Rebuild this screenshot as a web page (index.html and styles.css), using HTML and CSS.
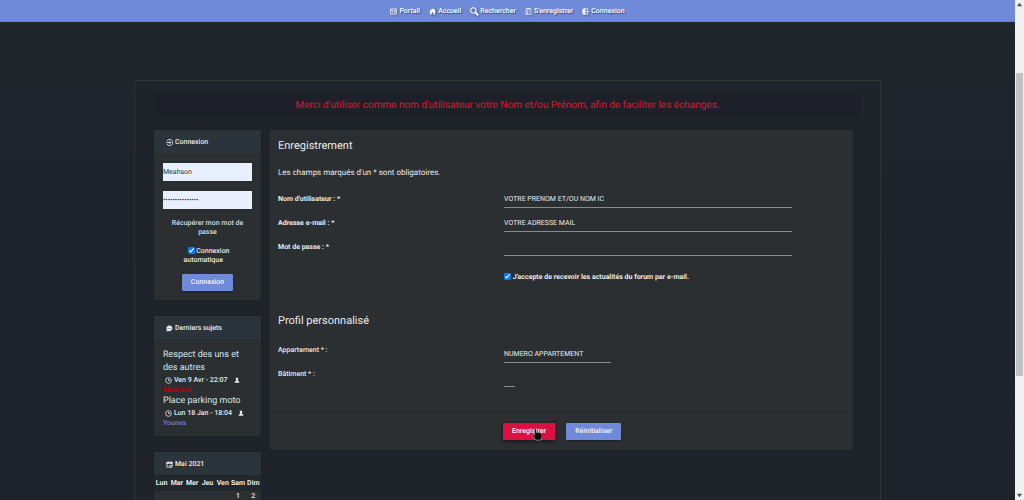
FILE: index.html
```html
<!DOCTYPE html>
<html lang="fr">
<head>
<meta charset="utf-8">
<title>Enregistrement</title>
<link rel="stylesheet" href="styles.css">
</head>
<body>
<div class="page">
  <nav class="topbar">
    <a href="#"><svg viewBox="0 0 16 16"><path d="M1 2h14v12H1zM1 5h14M4 8h3M9 8h4M4 11h3M9 11h4" fill="none" stroke="currentColor" stroke-width="1.6"/></svg>Portail</a>
    <a href="#"><svg viewBox="0 0 16 16"><path d="M8 1 0 8h2v7h4v-5h4v5h4V8h2l-3-3V2h-2v1z" fill="currentColor"/></svg>Accueil</a>
    <a href="#" class="search"><svg viewBox="0 0 16 16"><circle cx="6" cy="6" r="4.8" fill="none" stroke="currentColor" stroke-width="1.8"/><path d="m9.5 9.5 5.3 5.3" stroke="currentColor" stroke-width="2.8"/></svg>Rechercher</a>
    <a href="#"><svg viewBox="0 0 16 16"><path d="M2 2h12v13H2zM5 1h6v3H5zM4 7h3v2H4zM4 11h3v2H4zM9 8h3M9 12h3" fill="none" stroke="currentColor" stroke-width="1.4"/></svg>S'enregistrer</a>
    <a href="#"><svg viewBox="0 0 16 16"><path d="M1 2 8 0v16l-7-2z" fill="currentColor"/><path d="M8 2h5v3M8 14h5v-3M9 8h6M12 5l3 3-3 3" fill="none" stroke="currentColor" stroke-width="1.8"/></svg>Connexion</a>
  </nav>
  <div class="wrapper">
    <p class="announce">Merci d'utiliser comme nom d'utilisateur votre Nom et/ou Prénom, afin de faciliter les échanges.</p>
    <div class="columns">
      <aside class="side">
        <section class="card">
          <h3><svg viewBox="0 0 16 16"><path d="M2 5a7 7 0 1 1 0 6M1 8h10M8 5l3 3-3 3" fill="none" stroke="currentColor" stroke-width="2"/></svg>Connexion</h3>
          <form class="login">
            <input class="field" type="text" value="Meahson" aria-label="Nom d'utilisateur">
            <input class="field" type="password" value="motdepasse12345" aria-label="Mot de passe">
            <a class="recover" href="#">Récupérer mon mot de passe</a>
            <label class="auto"><input type="checkbox" class="tick" checked> Connexion automatique</label>
            <button class="btn" type="button">Connexion</button>
          </form>
        </section>
        <section class="card">
          <h3><svg viewBox="0 0 16 16"><path d="M8 1a7 6.500 0 0 0-6 10l-1 4 4-1.500A7 6.500 0 1 0 8 1z" fill="currentColor"/><path d="M4 8h1.500M7.300 8h1.500M10.600 8h1.500" stroke="#2c343b" stroke-width="1.600"/></svg>Derniers sujets</h3>
          <div class="topics">
            <a href="#" class="topic">Respect des uns et des autres</a>
            <div class="meta"><svg viewBox="0 0 16 16"><circle cx="8" cy="8" r="6.500" fill="none" stroke="currentColor" stroke-width="1.800"/><path d="M8 4v4h4" fill="none" stroke="currentColor" stroke-width="1.800"/></svg>Ven 9 Avr - 22:07<svg class="user" viewBox="0 0 16 16"><path d="M5 2h6v6l-1 2 4 2v3H2v-3l4-2-1-2z" fill="currentColor"/></svg></div>
            <a href="#" class="author red">Meahson</a>
            <a href="#" class="topic">Place parking moto</a>
            <div class="meta"><svg viewBox="0 0 16 16"><circle cx="8" cy="8" r="6.500" fill="none" stroke="currentColor" stroke-width="1.800"/><path d="M8 4v4h4" fill="none" stroke="currentColor" stroke-width="1.800"/></svg>Lun 18 Jan - 18:04<svg class="user" viewBox="0 0 16 16"><path d="M5 2h6v6l-1 2 4 2v3H2v-3l4-2-1-2z" fill="currentColor"/></svg></div>
            <a href="#" class="author blue">Younes</a>
          </div>
        </section>
        <section class="card">
          <h3><svg viewBox="0 0 16 16"><path d="M2 3h12v11H2z" fill="none" stroke="currentColor" stroke-width="2"/><path d="M1 3h14v3H1zM4 1h2v3H4zM10 1h2v3h-2zM8 9h4v3H8z" fill="currentColor"/></svg>Mai 2021</h3>
          <table class="calendar">
            <thead><tr><th>Lun</th><th>Mar</th><th>Mer</th><th>Jeu</th><th>Ven</th><th>Sam</th><th>Dim</th></tr></thead>
            <tbody><tr><td></td><td></td><td></td><td></td><td></td><td>1</td><td>2</td></tr></tbody>
          </table>
        </section>
      </aside>
      <form class="card register">
        <h2>Enregistrement</h2>
        <div class="group">
          <p class="hint">Les champs marqués d'un * sont obligatoires.</p>
          <div class="row"><label for="name">Nom d'utilisateur : *</label><input id="name" class="line" type="text" value="VOTRE PRENOM ET/OU NOM IC"></div>
          <div class="row"><label for="mail">Adresse e-mail : *</label><input id="mail" class="line" type="text" value="VOTRE ADRESSE MAIL"></div>
          <div class="row"><label for="pass">Mot de passe : *</label><input id="pass" class="line" type="password"></div>
          <div class="row news"><label class="accept"><input type="checkbox" class="tick" checked> J'accepte de recevoir les actualités du forum par e-mail.</label></div>
        </div>
        <h2 class="second">Profil personnalisé</h2>
        <div class="group profile">
          <div class="row"><label for="flat">Appartement * :</label><input id="flat" class="line medium" type="text" value="NUMERO APPARTEMENT"></div>
          <div class="row"><label for="block">Bâtiment * :</label><input id="block" class="line tiny" type="text"></div>
        </div>
        <div class="actions">
          <button class="btn primary" type="button">Enregistrer<svg class="cursor" viewBox="0 0 16 20"><path d="M4 2c0-2 3-2 3 0v5c1-1 2-1 3 0 1-1 2 0 3 1 2-1 3 0 3 2v4l-2 5H6l-5-7c-1-2 1-3 3-1z" fill="#080808" stroke="#ddd" stroke-width=".8"/></svg></button>
          <button class="btn" type="button">Réinitialiser</button>
        </div>
      </form>
    </div>
  </div>
</div>
<div class="scroll" aria-hidden="true">
  <svg viewBox="0 0 8 8"><path d="m1 6 3-4 3 4z" fill="#505050"/></svg>
  <div class="track"><div class="thumb"></div></div>
  <svg viewBox="0 0 8 8"><path d="m1 2 3 4 3-4z" fill="#505050"/></svg>
</div>
</body>
</html>
```
FILE: styles.css
```css
* { box-sizing: border-box; }
body {
  margin: 0;
  height: 100vh;
  display: flex;
  overflow: hidden;
  background: #1f252c;
  color: #e8eaeb;
  font: 500 7px/9px Roboto, sans-serif;
  text-rendering: geometricPrecision;
}
h2, h3, p { margin: 0; }
a { color: inherit; text-decoration: none; }
input, button { font: inherit; color: inherit; text-rendering: inherit; }
.page {
  flex: 1;
  min-width: 0;
  overflow: hidden;
  background: linear-gradient(#1f272b, #1f252c 100px, #1e232b);
}
.topbar {
  height: 22px;
  display: flex;
  align-items: center;
  justify-content: center;
  gap: 9px;
  padding-top: 1px;
  background: #6f8ad8;
  border-bottom: 1px solid #6680cb;
  color: #fff;
  text-shadow: 1px 1px 1px #0008;
}
.topbar a { display: flex; align-items: center; gap: 2px; }
.topbar svg { width: 7px; height: 7px; filter: drop-shadow(1px 1px 1px #0006); }
.topbar .search { gap: 1px; }
.topbar .search svg { width: 9px; height: 9px; }
.wrapper {
  max-width: 747px;
  min-height: 100%;
  margin: 58px auto 0;
  padding: 12px 19px;
  border: 1px solid #2e3333;
  background: #1f232a;
}
.announce {
  padding: 6px;
  background: #1d2028;
  color: #e0102f;
  font-size: 10px;
  font-weight: 400;
  line-height: 13px;
  text-align: center;
}
.columns {
  display: flex;
  align-items: flex-start;
  gap: 8px;
  margin-top: 12px;
  padding-right: 8px;
}
.side { width: 107px; display: flex; flex-direction: column; gap: 16px; }
.card { background: #2b2f32; border-radius: 2px; box-shadow: 0 0 2px #0004; }
.card h3 {
  display: flex;
  align-items: center;
  gap: 2px;
  height: 23px;
  padding: 1px 0 0 12px;
  background: #2c343b;
  font-size: 7px;
  font-weight: 500;
}
h3 svg { width: 7px; height: 7px; }
.login {
  display: flex;
  flex-direction: column;
  align-items: center;
  padding: 10px 9px 9px;
  text-align: center;
}
.field {
  width: 100%;
  height: 18px;
  margin-bottom: 10px;
  padding: 0;
  border: 0;
  background: #e8f0fe;
  color: #333;
  font-weight: 400;
}
.recover { padding: 0 8px; color: #cedde3; }
.auto { width: 48px; margin: 10px 0 9px; text-align: left; }
.tick { width: 7px; height: 7px; margin: 0; vertical-align: -1px; accent-color: #0875f5; }
.auto .tick { margin-left: 4px; }
.btn {
  position: relative;
  height: 17px;
  padding: 0 9px;
  border: 0;
  border-radius: 1px;
  background: #6f8ad8;
  color: #f2f4fb;
  box-shadow: 0 1px 2px #0005;
}
.topics { padding: 10px 9px 8px; }
.topic { display: block; color: #cfe6ee; font-size: 9px; font-weight: 400; line-height: 13px; }
.meta { display: flex; align-items: center; gap: 2px; height: 10px; padding-left: 2px; }
.meta svg { width: 7px; height: 7px; }
.meta .user { width: 6px; height: 6px; margin-left: 4px; }
.author { display: block; line-height: 10px; font-weight: 700; }
.red { color: #b80008; }
.blue { color: #5872df; }
.calendar { width: 100%; border-collapse: collapse; table-layout: fixed; background: #22272b; }
.calendar th { height: 16px; padding: 0; font-weight: 700; }
.calendar td { height: 11px; padding: 0; text-align: center; background: #2b2f32; }
.register { flex: 1; min-width: 0; }
.register h2 {
  padding: 9px 9px 4px;
  border-bottom: 1px solid #272b2e;
  font-size: 11px;
  font-weight: 400;
  line-height: 14px;
}
.group { padding: 10px 9px 0; }
.hint { font-size: 8px; font-weight: 400; line-height: 10px; margin-bottom: 12px; }
.row { display: grid; grid-template-columns: 226px minmax(0, 1fr); height: 24px; }
.row label { padding-top: 5px; }
.group:not(.profile) .row > label { font-weight: 700; }
.line {
  width: 288px;
  max-width: 100%;
  height: 18px;
  padding: 0;
  border: 0;
  border-bottom: 1px solid #878b8d;
  background: none;
  font-weight: 400;
}
.group .news .accept { grid-column: 2; font-weight: 500; padding-top: 11px; }
.news { height: 42px; }
.register .second { border-top: 1px solid #272b2e; padding-bottom: 5px; }
.profile { padding: 9px 9px 21px; }
.profile .row label { padding-top: 3px; }
.profile .line { margin-top: 2px; }
.register .medium { width: 107px; }
.register .tiny { width: 11px; }
.actions {
  display: flex;
  gap: 11px;
  padding: 10px 9px 10px 234px;
  border-top: 1px solid #272b2e;
}
.primary { background: #d91241; box-shadow: 0 1px 4px #0009; }
.cursor { position: absolute; right: 13px; bottom: -1px; width: 10px; height: 13px; }
.scroll {
  width: 9px;
  display: flex;
  flex-direction: column;
  align-items: center;
  padding: 1px;
  background: #f1f1f1;
}
.scroll svg { width: 7px; height: 7px; }
.track { flex: 1; width: 100%; display: flex; flex-direction: column; }
.track::before { content: ""; flex: 65; }
.thumb { flex: 303; background: #c1c1c1; }
.track::after { content: ""; flex: 116; }
```
